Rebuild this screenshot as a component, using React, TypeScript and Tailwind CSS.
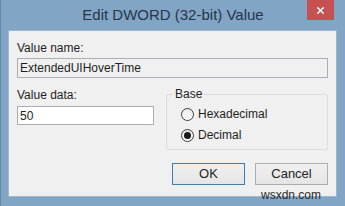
import { X } from 'lucide-react';

function Radio({ label, checked }: { label: string; checked?: boolean }) {
  return (
    <label className="flex items-center gap-[4px] h-[16px]">
      <span className="w-[13px] h-[13px] rounded-full border border-[#3c3c3c] bg-gradient-to-b from-[#e8e8e8] to-white flex items-center justify-center">
        {checked && <span className="w-[7px] h-[7px] rounded-full bg-[#1a1a1a]" />}
      </span>
      <span>{label}</span>
    </label>
  );
}

function Button({ label, focused }: { label: string; focused?: boolean }) {
  return (
    <button
      className={`w-[73px] h-[22px] border ${
        focused ? 'border-[#3c7fb1]' : 'border-[#adadad]'
      } bg-gradient-to-b from-[#f0f0f0] to-[#e5e5e5] text-[13px] text-[#1e1e1e]`}
    >
      {label}
    </button>
  );
}

export default function App() {
  return (
    <div className="relative w-[345px] h-[206px] bg-[#82a5c6] border-l border-[#6489ab] flex flex-col font-['Liberation_Sans',Arial,sans-serif] text-[12px] text-[#1e1e1e] overflow-hidden">
      <div className="relative h-[30px] flex items-center justify-center">
        <span className="text-[15px] text-[#25354a] mt-[1px]">Edit DWORD (32-bit) Value</span>
        <div className="absolute right-[11px] top-0 w-[27px] h-[20px] bg-[#c75050] flex items-center justify-center">
          <X className="w-[11px] h-[11px] text-white" strokeWidth={3} />
        </div>
      </div>

      <div className="ml-[7px] w-[329px] h-[167px] bg-[#f0f0f0] border border-[#9cb6cf] pl-[8px] pr-[8px] pt-[9px]">
        <div className="leading-[16px]">Value name:</div>
        <div className="mt-[2px] h-[20px] border border-[#abadb3] bg-[#f0f0f0] flex items-center px-[2px] leading-none">
          ExtendedUIHoverTime
        </div>

        <div className="mt-[9px] flex gap-[12px]">
          <div className="w-[137px] flex flex-col">
            <div className="leading-[16px]">Value data:</div>
            <div className="mt-[3px] h-[19px] border border-[#abadb3] bg-white flex items-center px-[2px] leading-none">
              50
            </div>
          </div>
          <div className="relative mt-[7px] flex-1 h-[56px] border border-[#dcdcdc] rounded-[2px] pl-[14px] pt-[11px] flex flex-col gap-[5px]">
            <span className="absolute -top-[9px] left-[6px] px-[2px] bg-[#f0f0f0] leading-[16px]">Base</span>
            <Radio label="Hexadecimal" />
            <Radio label="Decimal" checked />
          </div>
        </div>

        <div className="mt-[13px] flex justify-end gap-[10px]">
          <Button label="OK" focused />
          <Button label="Cancel" />
        </div>
      </div>

      <span className="absolute left-[260px] top-[187px] text-[12px] text-[#2a2a2a] leading-[16px]">wsxdn.com</span>
    </div>
  );
}
